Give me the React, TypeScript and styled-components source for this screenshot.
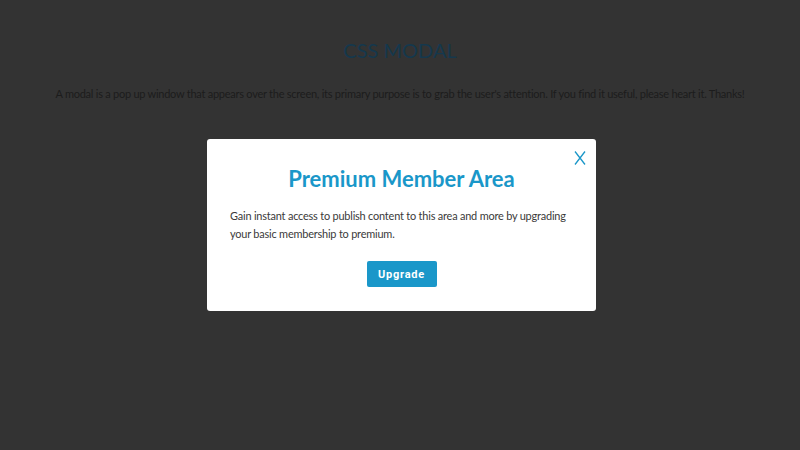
import React from "react";
import styled, { createGlobalStyle } from "styled-components";

const Global = createGlobalStyle`
  html, body { margin: 0; padding: 0; background: #333333; }
  body { font-family: Lato, "Open Sans", sans-serif; }
`;

const Page = styled.div`
  width: 800px;
  height: 450px;
  display: flex;
  flex-direction: column;
  align-items: center;
  padding-top: 38px;
  box-sizing: border-box;
`;

const Heading = styled.h1`
  margin: 0;
  font-family: Lato, sans-serif;
  font-weight: 400;
  font-size: 20px;
  line-height: 24px;
  color: #15384d;
  letter-spacing: 0;
`;

const Intro = styled.p`
  margin: 25px 0 0;
  font-family: Lato, sans-serif;
  font-size: 11px;
  line-height: 14px;
  color: #1c1c1c;
  letter-spacing: -0.25px;
`;

const Overlay = styled.div`
  position: fixed;
  inset: 0;
  display: flex;
  align-items: center;
  justify-content: center;
  padding-left: 3px;
`;

const Modal = styled.div`
  position: relative;
  width: 389px;
  height: 172px;
  box-sizing: border-box;
  background: #ffffff;
  border-radius: 3px;
  padding: 27px 16px 0 23px;
  display: flex;
  flex-direction: column;
  align-items: center;
`;

const Close = styled.button`
  position: absolute;
  top: 11px;
  right: 8px;
  width: 16px;
  height: 16px;
  padding: 0;
  border: 0;
  background: none;
  display: flex;
  align-items: center;
  justify-content: center;
  cursor: pointer;
`;

const Title = styled.h2`
  margin: 0 0 0 -7px;
  font-family: Lato, sans-serif;
  font-weight: 700;
  font-size: 22px;
  line-height: 26px;
  color: #1a97c9;
  letter-spacing: 0;
`;

const Body = styled.p`
  margin: 15px 0 0;
  align-self: stretch;
  font-family: Lato, sans-serif;
  font-size: 10.95px;
  line-height: 18px;
  color: #3a3a3a;
  letter-spacing: -0.2px;
`;

const Button = styled.button`
  margin: 18px 0 0 -7px;
  width: 70px;
  height: 26px;
  border: 0;
  border-radius: 2px;
  background: #1a97c9;
  color: #ffffff;
  font-family: Roboto, "Liberation Sans", sans-serif;
  font-weight: 700;
  font-size: 11px;
  letter-spacing: 0.8px;
  cursor: pointer;
`;

export default function App() {
  return (
    <>
      <Global />
      <Page>
        <Heading>CSS MODAL</Heading>
        <Intro>
          A modal is a pop up window that appears over the screen, its primary purpose is to grab the user's attention. If you find it useful, please heart it. Thanks!
        </Intro>
      </Page>
      <Overlay>
        <Modal>
          <Close aria-label="Close">
            <svg width="12" height="14" viewBox="0 0 12 14">
              <path d="M1 0.5 L11 13.5 M11 0.5 L1 13.5" stroke="#1a97c9" strokeWidth="1.3" fill="none" />
            </svg>
          </Close>
          <Title>Premium Member Area</Title>
          <Body>
            Gain instant access to publish content to this area and more by upgrading your basic membership to premium.
          </Body>
          <Button>Upgrade</Button>
        </Modal>
      </Overlay>
    </>
  );
}
